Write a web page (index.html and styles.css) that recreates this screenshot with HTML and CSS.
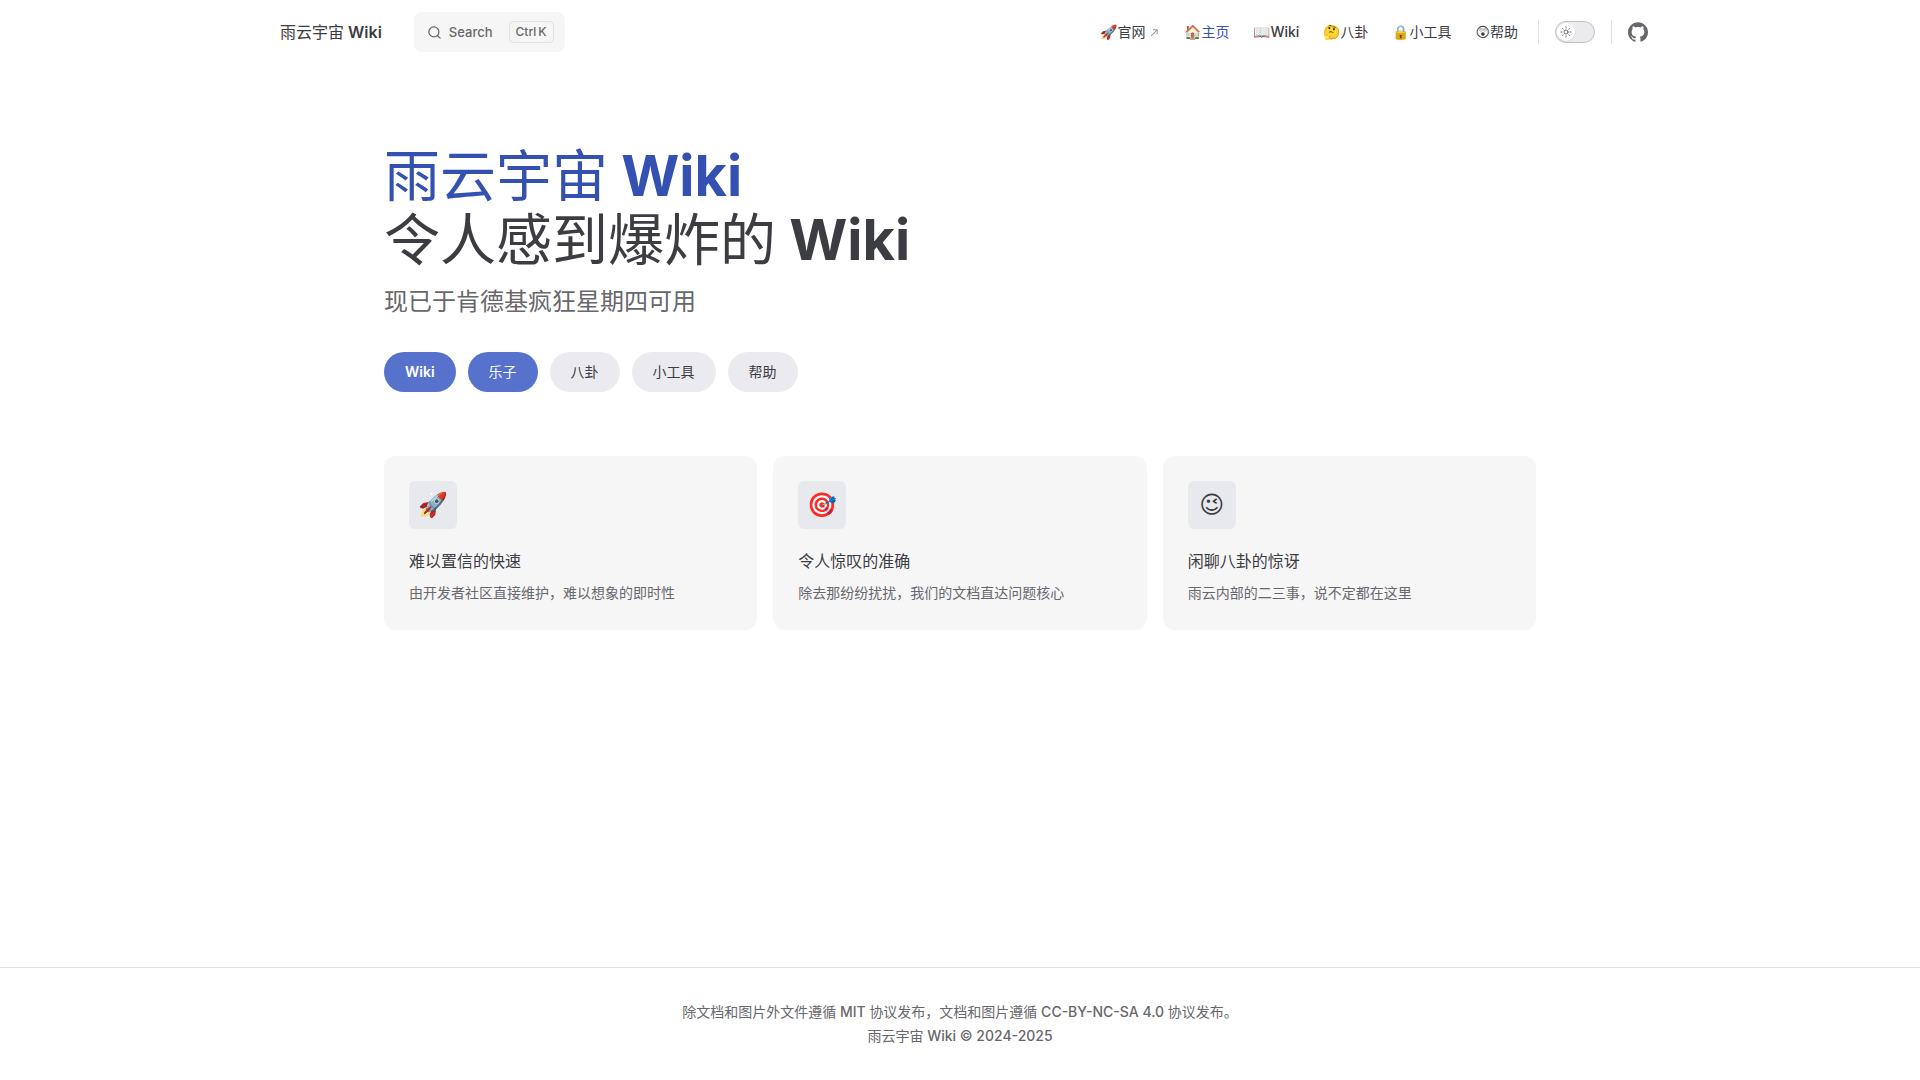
FILE: index.html
```
<!DOCTYPE html>
<html lang="zh-CN">
<head>
<meta charset="utf-8">
<title>雨云宇宙 Wiki</title>
<meta name="viewport" content="width=device-width, initial-scale=1">
<link rel="stylesheet" href="styles.css">
</head>
<body>
<header class="navbar">
  <div class="navbar-inner">
    <a class="site-title" href="#"><span class="han">雨云宇宙</span> Wiki</a>
    <button class="search" type="button">
      <svg class="search-icon" viewBox="0 0 24 24" fill="none" stroke="currentColor" stroke-width="2" stroke-linecap="round" stroke-linejoin="round" aria-hidden="true"><circle cx="11" cy="11" r="8"/><path d="m21 21-4.3-4.3"/></svg>
      <span class="search-label">Search</span>
      <span class="search-keys"><kbd>Ctrl</kbd><kbd>K</kbd></span>
    </button>
    <nav class="menu" aria-label="Main">
      <a class="menu-link external" href="#"><span>🚀<span class="han">官网</span></span><svg class="arrow" viewBox="0 0 24 24" aria-hidden="true"><path fill="currentColor" d="M0 0h24v24H0V0z" fill-opacity="0"/><path fill="currentColor" d="M9 5v2h6.59L4 18.59 5.41 20 17 8.41V15h2V5H9z"/></svg></a>
      <a class="menu-link active" href="#">🏠<span class="han">主页</span></a>
      <a class="menu-link" href="#">📖Wiki</a>
      <a class="menu-link" href="#">🤔<span class="han">八卦</span></a>
      <a class="menu-link" href="#">🔒<span class="han">小工具</span></a>
      <a class="menu-link" href="#"><span class="glyph">😲</span><span class="han">帮助</span></a>
    </nav>
    <div class="extras">
      <button class="switch" type="button" role="switch" aria-checked="false" aria-label="Dark mode">
        <span class="knob"><svg viewBox="0 0 24 24" fill="none" stroke="currentColor" stroke-width="2" stroke-linecap="round" stroke-linejoin="round" aria-hidden="true"><circle cx="12" cy="12" r="4"/><path d="M12 2v2M12 20v2M4.93 4.93l1.41 1.41M17.66 17.66l1.41 1.41M2 12h2M20 12h2M6.34 17.66l-1.41 1.41M19.07 4.93l-1.41 1.41"/></svg></span>
      </button>
      <a class="github" href="#" aria-label="GitHub"><svg viewBox="0 0 24 24" fill="currentColor" aria-hidden="true"><path d="M12 .297c-6.63 0-12 5.373-12 12 0 5.303 3.438 9.8 8.205 11.385.6.113.82-.258.82-.577 0-.285-.01-1.04-.015-2.04-3.338.724-4.042-1.61-4.042-1.61C4.422 18.07 3.633 17.7 3.633 17.7c-1.087-.744.084-.729.084-.729 1.205.084 1.838 1.236 1.838 1.236 1.07 1.835 2.809 1.305 3.495.998.108-.776.417-1.305.76-1.605-2.665-.3-5.466-1.332-5.466-5.93 0-1.31.465-2.38 1.235-3.22-.135-.303-.54-1.523.105-3.176 0 0 1.005-.322 3.3 1.23.96-.267 1.98-.399 3-.405 1.02.006 2.04.138 3 .405 2.28-1.552 3.285-1.23 3.285-1.23.645 1.653.24 2.873.12 3.176.765.84 1.23 1.91 1.23 3.22 0 4.61-2.805 5.625-5.475 5.92.42.36.81 1.096.81 2.22 0 1.606-.015 2.896-.015 3.286 0 .315.21.69.825.57C20.565 22.092 24 17.592 24 12.297c0-6.627-5.373-12-12-12"/></svg></a>
    </div>
  </div>
</header>
<main class="content">
  <section class="hero">
    <h1 class="headline">
      <span class="name"><span class="han">雨云宇宙</span> Wiki</span>
      <span class="text"><span class="han">令人感到爆炸的</span> Wiki</span>
    </h1>
    <p class="tagline">现已于肯德基疯狂星期四可用</p>
    <div class="actions">
      <a class="button brand latin" href="#">Wiki</a>
      <a class="button brand" href="#">乐子</a>
      <a class="button" href="#">八卦</a>
      <a class="button" href="#">小工具</a>
      <a class="button" href="#">帮助</a>
    </div>
  </section>
  <section class="features">
    <article class="card">
      <div class="card-icon">🚀</div>
      <h2>难以置信的快速</h2>
      <p>由开发者社区直接维护，难以想象的即时性</p>
    </article>
    <article class="card">
      <div class="card-icon">🎯</div>
      <h2>令人惊叹的准确</h2>
      <p>除去那纷纷扰扰，我们的文档直达问题核心</p>
    </article>
    <article class="card">
      <div class="card-icon glyph">😉</div>
      <h2>闲聊八卦的惊讶</h2>
      <p>雨云内部的二三事，说不定都在这里</p>
    </article>
  </section>
</main>
<footer class="footer">
  <p><span class="han">除文档和图片外文件遵循</span> MIT <span class="han">协议发布，文档和图片遵循</span> CC-BY-NC-SA 4.0 <span class="han">协议发布。</span></p>
  <p><span class="han">雨云宇宙</span> Wiki © 2024-2025</p>
</footer>
</body>
</html>
```
FILE: styles.css
```
:root {
  --text-1: #3c3c43;
  --text-2: #67676c;
  --text-3: #929295;
  --brand-1: #3451b2;
  --brand-3: #5672cd;
  --soft: #f6f6f7;
  --divider: #e2e2e3;
}

* { box-sizing: border-box; }

body {
  margin: 0;
  min-height: 100vh;
  display: flex;
  flex-direction: column;
  background: #fff;
  color: var(--text-1);
  font-family: Inter, "Noto Sans CJK SC", sans-serif;
  font-size: 16px;
  line-height: 24px;
}

h1, h2, p { margin: 0; }
a { color: inherit; text-decoration: none; }
button { font: inherit; color: inherit; cursor: pointer; }
svg { display: block; }

.han { font-weight: 400; }
.glyph { font-family: Inter, "DejaVu Sans", sans-serif; }

/* Navigation */
.navbar { padding: 0 32px; }

.navbar-inner {
  display: flex;
  align-items: center;
  max-width: 1376px;
  height: 64px;
  margin: 0 auto;
  padding-left: 8px;
}

.site-title {
  font-size: 16px;
  font-weight: 600;
  white-space: nowrap;
}

.search {
  display: flex;
  align-items: center;
  height: 40px;
  margin-left: 32px;
  padding: 0 11px 0 13px;
  border: 0;
  border-radius: 8px;
  background: var(--soft);
  color: var(--text-2);
  font-size: 13px;
  font-weight: 500;
}

.search-icon { width: 15px; height: 15px; }
.search-label { margin: 0 16px 0 7px; }

.search-keys {
  display: flex;
  gap: 2px;
  padding: 0 6px;
  border: 1px solid var(--divider);
  border-radius: 4px;
  font-size: 12px;
  line-height: 20px;
}

kbd { font-family: inherit; }

.menu {
  display: flex;
  margin-left: auto;
}

.menu-link {
  padding: 0 12px;
  font-size: 14px;
  font-weight: 500;
  line-height: 64px;
  white-space: nowrap;
}

.menu-link.active { color: var(--brand-1); }
.external { display: flex; align-items: center; gap: 4px; }
.arrow { width: 11px; height: 11px; color: var(--text-3); }

.extras { display: flex; align-items: center; }

.extras::before,
.switch + .github::before {
  content: "";
  width: 1px;
  height: 24px;
  background: var(--divider);
}

.extras::before { margin: 0 16px 0 8px; }

.switch {
  width: 40px;
  height: 22px;
  padding: 1px;
  border: 1px solid #c2c2c4;
  border-radius: 11px;
  background: #ebebef;
}

.knob {
  display: flex;
  align-items: center;
  justify-content: center;
  width: 18px;
  height: 18px;
  border-radius: 50%;
  background: #fff;
  color: var(--text-2);
  box-shadow: 0 1px 2px rgba(0, 0, 0, 0.04), 0 1px 2px rgba(0, 0, 0, 0.06);
}

.knob svg { width: 12px; height: 12px; }

.github {
  display: flex;
  align-items: center;
  gap: 16px;
  margin-left: 16px;
  color: var(--text-2);
}

.github svg { width: 20px; height: 20px; }

/* Page body */
.content {
  flex: 1;
  width: 100%;
  max-width: 1280px;
  margin: 0 auto;
  padding: 80px 64px;
}

.headline {
  font-size: 56px;
  font-weight: 700;
  line-height: 64px;
}

.name, .text { display: block; }
.name { color: var(--brand-1); }

.tagline {
  padding-top: 12px;
  color: var(--text-2);
  font-size: 24px;
  line-height: 36px;
}

.actions {
  display: flex;
  flex-wrap: wrap;
  gap: 12px;
  padding-top: 32px;
}

.button {
  padding: 0 20px;
  border: 1px solid transparent;
  border-radius: 20px;
  background: #ebebef;
  font-size: 14px;
  line-height: 38px;
}

.brand { background: var(--brand-3); color: #fff; }
.latin { font-weight: 600; }

.features {
  display: grid;
  grid-template-columns: repeat(3, 1fr);
  gap: 16px;
  padding-top: 64px;
}

.card {
  padding: 25px;
  border-radius: 12px;
  background: var(--soft);
}

.card-icon {
  display: flex;
  align-items: center;
  justify-content: center;
  width: 48px;
  height: 48px;
  margin-bottom: 20px;
  border-radius: 6px;
  background: #e8e9ed;
  font-size: 24px;
}

.card h2 {
  font-size: 16px;
  font-weight: 400;
}

.card p {
  padding-top: 8px;
  color: var(--text-2);
  font-size: 14px;
}

/* Footer */
.footer {
  padding: 32px 24px;
  border-top: 1px solid var(--divider);
  color: var(--text-2);
  font-size: 14px;
  font-weight: 500;
  text-align: center;
}

@media (max-width: 960px) {
  .features { grid-template-columns: 1fr; }
  .menu { display: none; }
  .extras { margin-left: auto; }
}
```
